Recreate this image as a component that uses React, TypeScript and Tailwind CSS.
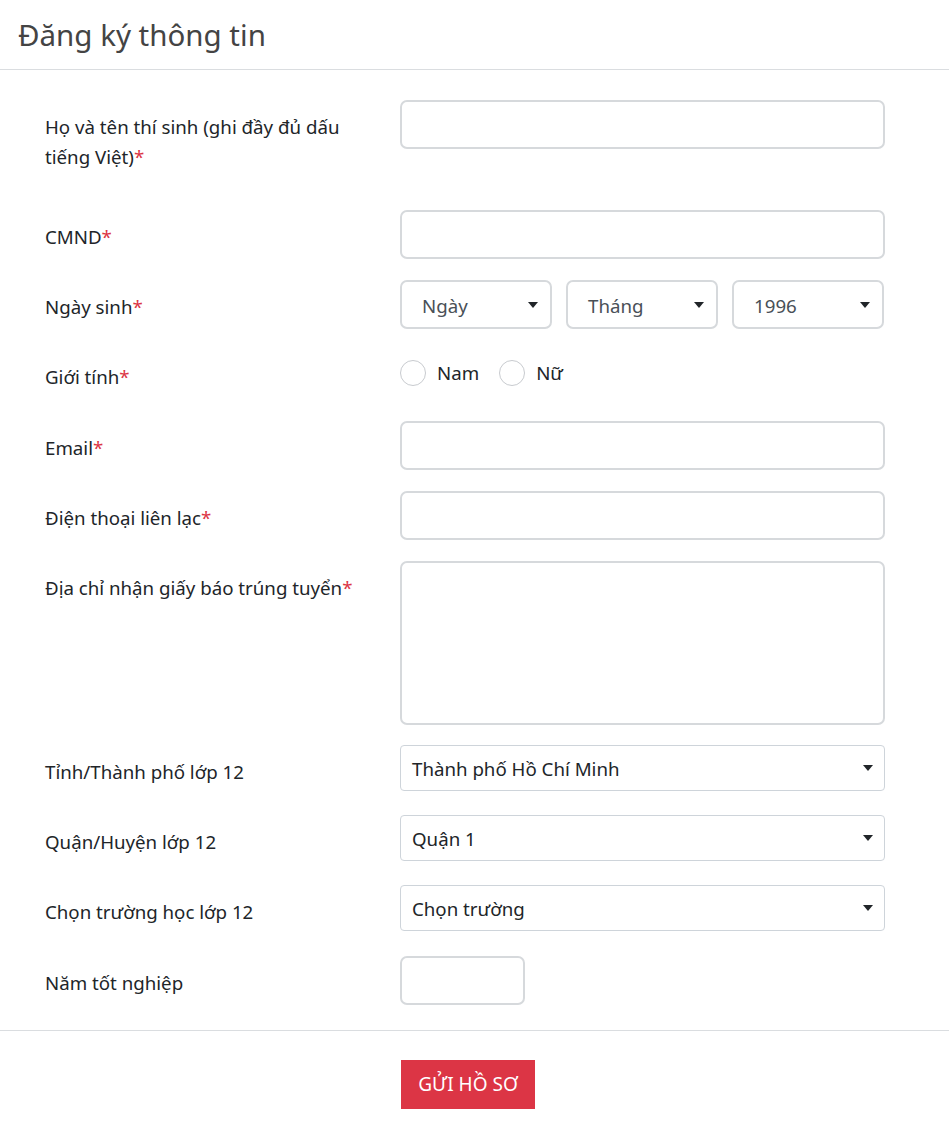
import React from "react";

const font = { fontFamily: '"Noto Sans", "Open Sans", sans-serif' };

function Req() {
  return <span className="text-[#dc3545]">*</span>;
}

function Caret() {
  return (
    <svg width="10" height="6" viewBox="0 0 10 6" className="shrink-0" aria-hidden>
      <path d="M0 0 L10 0 L5 6 Z" fill="#212529" />
    </svg>
  );
}

function Row({ label, children, className = "" }: { label: React.ReactNode; children: React.ReactNode; className?: string }) {
  return (
    <div className={`flex ${className}`}>
      <div className="w-[400px] shrink-0 pl-[45px] pr-[40px] pt-[12px] text-[18.7px] leading-[30px] text-[#212529]">{label}</div>
      <div className="w-[485px]">{children}</div>
    </div>
  );
}

function Input({ className = "" }: { className?: string }) {
  return <div className={`h-[49px] rounded-[7px] border-2 border-[#d6d9dc] bg-white ${className}`} />;
}

function SmallSelect({ value }: { value: string }) {
  return (
    <div className="flex h-[49px] w-[152px] items-center justify-between rounded-[7px] border-2 border-[#d6d9dc] pl-[20px] pr-[12px] text-[18.7px] text-[#495057]">
      <span className="pt-[4px]">{value}</span>
      <Caret />
    </div>
  );
}

function Select({ value }: { value: string }) {
  return (
    <div className="flex h-[46px] items-center justify-between rounded-[4px] border border-[#ced4da] pl-[11px] pr-[11px] text-[18.7px] text-[#212529]">
      <span className="pt-[3px]">{value}</span>
      <Caret />
    </div>
  );
}

function Radio({ label }: { label: string }) {
  return (
    <div className="flex items-center gap-[11px]">
      <div className="h-[26px] w-[26px] rounded-full border border-[#c8cbcf] bg-white" />
      <span className="text-[18.7px] text-[#212529]">{label}</span>
    </div>
  );
}

export default function App() {
  return (
    <div className="min-h-[1137px] w-[949px] bg-white" style={font}>
      <div className="flex h-[70px] items-center border-b border-[#dadde0] pl-[18px]">
        <h1 className="text-[29.5px] leading-none text-[#444]">Đăng ký thông tin</h1>
      </div>

      <div className="pt-[30px]">
        <Row label={<>Họ và tên thí sinh (ghi đầy đủ dấu tiếng Việt)<Req /></>} className="h-[110px]">
          <Input />
        </Row>
        <Row label={<>CMND<Req /></>} className="h-[70px]">
          <Input />
        </Row>
        <Row label={<>Ngày sinh<Req /></>} className="h-[70px]">
          <div className="flex gap-[14px]">
            <SmallSelect value="Ngày" />
            <SmallSelect value="Tháng" />
            <SmallSelect value="1996" />
          </div>
        </Row>
        <Row label={<>Giới tính<Req /></>} className="h-[71px]">
          <div className="flex gap-[20px] pt-[9px]">
            <Radio label="Nam" />
            <Radio label="Nữ" />
          </div>
        </Row>
        <Row label={<>Email<Req /></>} className="h-[70px]">
          <Input />
        </Row>
        <Row label={<>Điện thoại liên lạc<Req /></>} className="h-[70px]">
          <Input />
        </Row>
        <Row label={<>Địa chỉ nhận giấy báo trúng tuyển<Req /></>} className="h-[184px]">
          <div className="h-[164px] rounded-[7px] border-2 border-[#d6d9dc]" />
        </Row>
        <Row label="Tỉnh/Thành phố lớp 12" className="h-[70px]">
          <Select value="Thành phố Hồ Chí Minh" />
        </Row>
        <Row label="Quận/Huyện lớp 12" className="h-[70px]">
          <Select value="Quận 1" />
        </Row>
        <Row label="Chọn trường học lớp 12" className="h-[71px]">
          <Select value="Chọn trường" />
        </Row>
        <Row label="Năm tốt nghiệp" className="h-[74px]">
          <Input className="w-[125px]" />
        </Row>
      </div>

      <div className="border-t border-[#dadde0] pt-[29px]">
        <div className="pl-[401px]">
          <button className="flex h-[49px] w-[134px] items-center justify-center bg-[#dc3545] text-[19px] text-white">
            GỬI HỒ SƠ
          </button>
        </div>
      </div>
    </div>
  );
}
